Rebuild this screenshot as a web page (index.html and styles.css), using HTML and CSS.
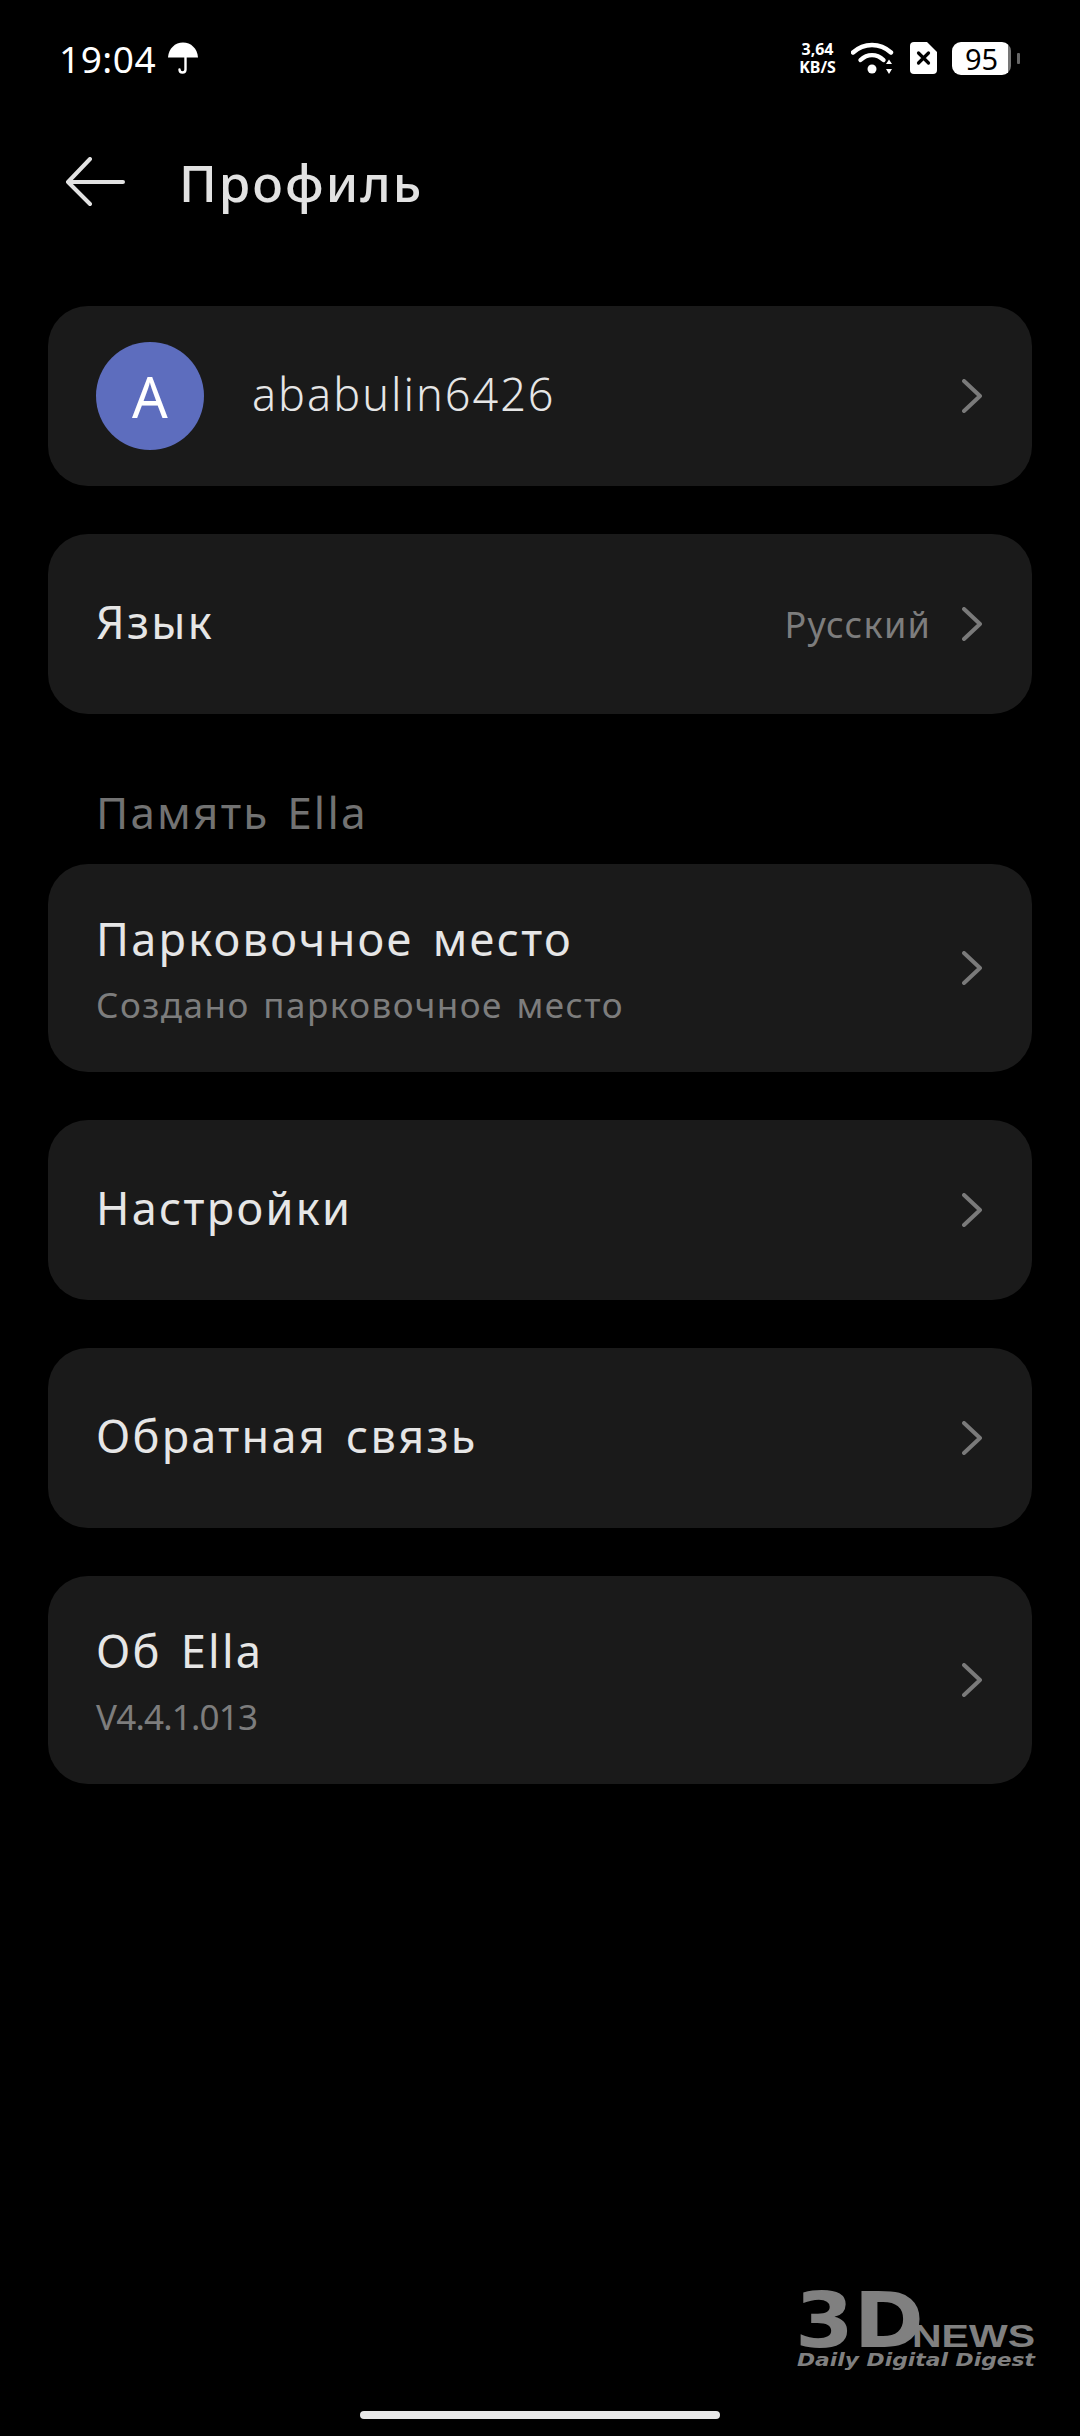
FILE: index.html
```html
<!DOCTYPE html>
<html lang="ru">
<head>
    <meta charset="UTF-8">
    <meta name="viewport" content="width=device-width, initial-scale=1.0">
    <title>Профиль</title>
    <link rel="stylesheet" href="styles.css">
</head>
<body>
    <div class="status-bar">
        <div class="status-left">
            <span class="time">19:04</span>
            <svg class="umbrella" viewBox="0 0 30 32" width="30" height="32">
                <path d="M0 15.5C0.6 6.5 7 0.5 15 0.5S29.4 6.5 30 15.5Z" fill="#fff"/>
                <path d="M17.5 15V27.5C17.5 31.5 11.5 31.5 11.5 27.5" fill="none" stroke="#fff" stroke-width="2.4" stroke-linecap="round"/>
            </svg>
        </div>
        <div class="status-right">
            <div class="speed"><span>3,64</span><span>KB/S</span></div>
            <svg class="wifi" viewBox="0 0 44 34" width="44" height="34">
                <path d="M2 11.5C13 1.5 29 1.5 40 11.5" fill="none" stroke="#fff" stroke-width="4.4" stroke-linecap="round"/>
                <path d="M9.5 19C16.5 12.5 25.5 12.5 32.5 19" fill="none" stroke="#fff" stroke-width="4.4" stroke-linecap="round"/>
                <circle cx="21" cy="28" r="4.5" fill="#fff"/>
                <path d="M38 18.5L41 23H35ZM38 33L35 28H41Z" fill="#fff"/>
            </svg>
            <svg class="sim" viewBox="0 0 27 32" width="27" height="32">
                <path d="M4 0H17L27 10V28Q27 32 23 32H4Q0 32 0 28V4Q0 0 4 0Z" fill="#fff"/>
                <path d="M8.5 11L18.5 21M18.5 11L8.5 21" stroke="#000" stroke-width="3.2" stroke-linecap="round"/>
            </svg>
            <div class="battery">
                <span class="battery-level">95</span>
                <span class="battery-cap"></span>
            </div>
        </div>
    </div>

    <div class="header">
        <svg class="back" viewBox="0 0 60 50" width="60" height="50">
            <path d="M3 25H58M25 2L3 25L25 47" fill="none" stroke="#e2e2e2" stroke-width="4" stroke-linecap="round" stroke-linejoin="round"/>
        </svg>
        <h1>Профиль</h1>
    </div>

    <div class="list">
        <div class="card">
            <div class="avatar">A</div>
            <span class="title user">ababulin6426</span>
            <svg class="chevron" viewBox="0 0 20 34" width="20" height="34"><path d="M2 2L18 17L2 32" /></svg>
        </div>
        <div class="card">
            <span class="title">Язык</span>
            <span class="value">Русский</span>
            <svg class="chevron" viewBox="0 0 20 34" width="20" height="34"><path d="M2 2L18 17L2 32" /></svg>
        </div>

        <div class="section">
            <div class="section-title">Память Ella</div>
            <div class="card tall">
                <div class="text">
                    <span class="title">Парковочное место</span>
                    <span class="sub">Создано парковочное место</span>
                </div>
                <svg class="chevron" viewBox="0 0 20 34" width="20" height="34"><path d="M2 2L18 17L2 32" /></svg>
            </div>
        </div>

        <div class="card">
            <span class="title">Настройки</span>
            <svg class="chevron" viewBox="0 0 20 34" width="20" height="34"><path d="M2 2L18 17L2 32" /></svg>
        </div>
        <div class="card">
            <span class="title">Обратная связь</span>
            <svg class="chevron" viewBox="0 0 20 34" width="20" height="34"><path d="M2 2L18 17L2 32" /></svg>
        </div>
        <div class="card tall">
            <div class="text">
                <span class="title">Об Ella</span>
                <span class="sub version">V4.4.1.013</span>
            </div>
            <svg class="chevron" viewBox="0 0 20 34" width="20" height="34"><path d="M2 2L18 17L2 32" /></svg>
        </div>
    </div>

    <svg class="watermark" viewBox="0 0 245 84" width="245" height="84">
        <text x="0" y="56" font-size="77" textLength="129" lengthAdjust="spacingAndGlyphs">3D</text>
        <text class="wm-news" x="117" y="56" font-size="31" textLength="123" lengthAdjust="spacingAndGlyphs">NEWS</text>
        <text class="wm-tag" x="2" y="75" font-size="18" textLength="238" lengthAdjust="spacingAndGlyphs">Daily Digital Digest</text>
    </svg>
    <div class="home-bar"></div>
</body>
</html>
```

FILE: styles.css
```css
* {
    box-sizing: border-box;
}
body {
    margin: 0;
    width: 1080px;
    height: 2436px;
    background: #000;
    color: #e6e6e6;
    font-family: "Noto Sans", sans-serif;
    position: relative;
    overflow: hidden;
}
.status-bar {
    display: flex;
    justify-content: space-between;
    align-items: center;
    height: 116px;
    padding: 0 60px 0 59px;
}
.status-left {
    display: flex;
    align-items: center;
    gap: 12px;
}
.time {
    font-size: 37px;
    color: #fff;
    letter-spacing: 0.5px;
}
.status-right {
    display: flex;
    align-items: center;
}
.speed {
    display: flex;
    flex-direction: column;
    align-items: center;
    width: 37px;
    font-size: 16px;
    line-height: 18px;
    font-weight: 700;
    color: #fff;
    white-space: nowrap;
    margin-right: 15px;
}
.sim {
    margin-left: 15px;
}
.battery {
    display: flex;
    align-items: center;
    margin-left: 15px;
}
.battery-level {
    width: 59px;
    height: 33px;
    border-radius: 9px;
    background: linear-gradient(to right, #fff 95%, #777 95%);
    color: #000;
    font-size: 29px;
    line-height: 33px;
    text-align: center;
}
.battery-cap {
    width: 3px;
    height: 11px;
    margin-left: 6px;
    border-radius: 1px;
    background: #666;
}
.header {
    display: flex;
    align-items: center;
    height: 98px;
    margin-top: 17px;
    padding-left: 65px;
    gap: 54px;
}
.header h1 {
    margin: 0;
    font-size: 51px;
    font-weight: 540;
    letter-spacing: 2px;
    color: #e2e2e2;
}
.list {
    display: flex;
    flex-direction: column;
    gap: 48px;
    margin: 75px 48px 0;
}
.card {
    display: flex;
    align-items: center;
    height: 180px;
    padding: 0 50px 0 48px;
    border-radius: 40px;
    background: #1a1a1a;
}
.card.tall {
    height: 208px;
}
.avatar {
    flex: none;
    width: 108px;
    height: 108px;
    margin-right: 48px;
    border-radius: 50%;
    background: #5d6dbe;
    color: #fff;
    font-size: 56px;
    line-height: 108px;
    text-align: center;
}
.title {
    font-size: 45px;
    color: #e6e6e6;
    letter-spacing: 2.3px;
    word-spacing: 5px;
    margin-bottom: 5px;
}
.title.user {
    font-weight: 350;
    letter-spacing: 2px;
}
.text {
    display: flex;
    flex-direction: column;
    gap: 7px;
}
.sub {
    font-size: 35px;
    color: #7d7d7d;
    letter-spacing: 1.5px;
    word-spacing: 3px;
}
.sub.version {
    letter-spacing: -0.8px;
}
.value {
    margin-left: auto;
    font-size: 36px;
    color: #7d7d7d;
    letter-spacing: 1.2px;
}
.value + .chevron {
    margin-left: 31px;
}
.title + .chevron,
.text + .chevron {
    margin-left: auto;
}
.chevron {
    flex: none;
}
.chevron path {
    fill: none;
    stroke: #7a7a7a;
    stroke-width: 4;
    stroke-linecap: round;
    stroke-linejoin: round;
}
.section {
    margin-top: 20px;
}
.section-title {
    margin: 0 48px 22px;
    font-size: 44px;
    line-height: 60px;
    letter-spacing: 2.2px;
    word-spacing: 4px;
    color: #727272;
}
.watermark {
    position: absolute;
    left: 795px;
    top: 2291px;
    overflow: visible;
    fill: #808080;
    font-family: "DejaVu Sans", sans-serif;
    font-weight: 700;
}
.wm-news {
    font-family: "Liberation Sans", sans-serif;
}
.wm-tag {
    font-style: italic;
}
.home-bar {
    position: absolute;
    left: 360px;
    top: 2411px;
    width: 360px;
    height: 8px;
    border-radius: 4px;
    background: #e8e8e8;
}
```
